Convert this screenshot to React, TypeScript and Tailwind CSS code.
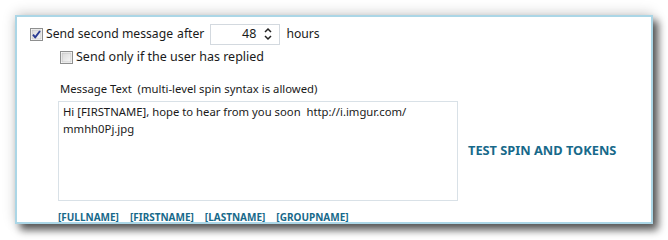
const font = { fontFamily: '"Noto Sans", "Open Sans", sans-serif' }

const CheckBox = ({ checked }: { checked: boolean }) => (
    <svg width="13" height="13" viewBox="0 0 13 13" className="shrink-0">
        <defs>
            <linearGradient id={checked ? 'cbg1' : 'cbg2'} x1="0" y1="0" x2="1" y2="1">
                <stop offset="0" stopColor="#d9d9d9" />
                <stop offset="1" stopColor="#f7f7f7" />
            </linearGradient>
        </defs>
        <rect x="0.5" y="0.5" width="12" height="12" fill="#fff" stroke="#8e8f8f" />
        <rect x="2" y="2" width="9" height="9" fill={`url(#${checked ? 'cbg1' : 'cbg2'})`} stroke="#b8b8b8" strokeWidth="0.6" />
        {checked && (
            <path d="M3 6.6 L5.2 9.4 L10 3" fill="none" stroke="#2a3c93" strokeWidth="1.9" strokeLinejoin="round" />
        )}
    </svg>
)

const Spinner = () => (
    <div className="flex items-center w-[70px] h-[21px] border border-[#d3d9df] bg-white">
        <span className="flex-1 text-right pr-[8px] text-[12.5px] text-[#1a1a1a]">48</span>
        <svg width="8" height="14" viewBox="0 0 8 14" className="mr-[7px]">
            <path d="M1 5 L4 2 L7 5" fill="none" stroke="#222" strokeWidth="1.5" />
            <path d="M1 9 L4 12 L7 9" fill="none" stroke="#222" strokeWidth="1.5" />
        </svg>
    </div>
)

const tokens = ['[FULLNAME]', '[FIRSTNAME]', '[LASTNAME]', '[GROUPNAME]']

export default function App() {
    return (
        <div className="w-[668px] h-[240px] bg-white overflow-hidden pt-[15px] pl-[15px]" style={font}>
            <div className="w-[638px] h-[209px] bg-white border-2 border-[#abd6e6] shadow-[5px_6px_8px_rgba(0,0,0,0.65),0_-2px_12px_rgba(0,0,0,0.18)] pl-[13px] pt-[6px] text-[#1a1a1a] overflow-hidden">
                <div className="flex items-center h-[22px] text-[12.2px]">
                    <CheckBox checked />
                    <span className="ml-[3px]">Send second message</span>
                    <span className="ml-[4px]">after</span>
                    <span className="ml-[6px]"><Spinner /></span>
                    <span className="ml-[6px]">hours</span>
                </div>
                <div className="flex items-center h-[14px] mt-[5px] ml-[30px] text-[12.5px]">
                    <CheckBox checked={false} />
                    <span className="ml-[3px]">Send only if the user has replied</span>
                </div>
                <div className="ml-[30px] mt-[18px] text-[11.3px] leading-[14px]">Message Text&nbsp; (multi-level spin syntax is allowed)</div>
                <div className="flex items-center mt-[5px] ml-[28px]">
                    <div className="w-[400px] h-[100px] border border-[#d9e1e7] px-[4px] py-[1px] text-[11.3px] leading-[17px]">
                        Hi [FIRSTNAME], hope to hear from you soon&nbsp; http://i.imgur.com/
                        <br />
                        mmhh0Pj.jpg
                    </div>
                    <div className="ml-[10px] text-[12.8px] font-bold text-[#17698a]">TEST SPIN AND TOKENS</div>
                </div>
                <div className="flex gap-[11px] ml-[28px] mt-[10px] text-[10px] font-bold text-[#17698a] leading-[12px]">
                    {tokens.map(t => (
                        <span key={t}>{t}</span>
                    ))}
                </div>
            </div>
        </div>
    )
}
